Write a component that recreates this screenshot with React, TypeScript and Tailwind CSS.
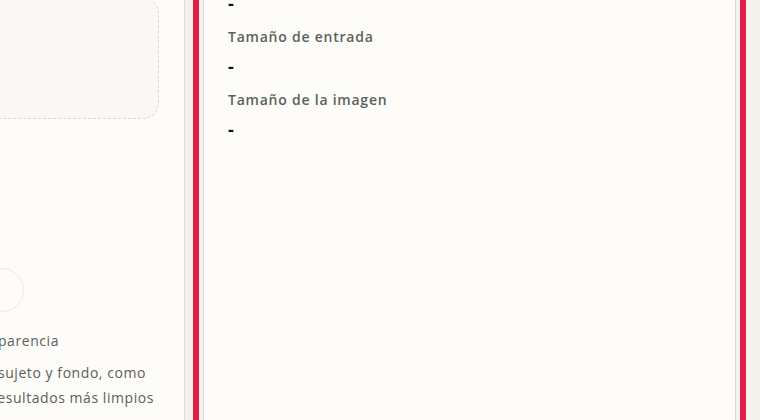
const FIELDS = [
  { label: "Formato", value: "-" },
  { label: "Tamaño de entrada", value: "-" },
  { label: "Tamaño de la imagen", value: "-" },
];

function Sidebar() {
  return (
    <aside className="w-[185px] shrink-0 overflow-hidden border-r border-[#dcd9d3] bg-[#fdfcf8]">
      <div className="-ml-[200px] w-[384px] pr-[25px]">
        {/* drop zone */}
        <div className="-mt-[3px] h-[122px] rounded-2xl border border-dashed border-[#dcd9d3] bg-[#f9f8f4]" />

        {/* option */}
        <div className="mt-[149px] flex">
          <div className="ml-[180px] h-[44px] w-[44px] rounded-full border border-[#ece9e3] bg-[#fdfcf8]" />
        </div>
        <div className="mt-[16px] text-[14px] leading-[25px] tracking-[0.04em] text-[#5b605b]">
          <div className="pr-[100px] text-right whitespace-nowrap">Transparencia</div>
          <div className="mt-[7px] pr-[13px] text-right whitespace-nowrap">Separa el sujeto y fondo, como</div>
          <div className="pr-[5px] text-right whitespace-nowrap">para resultados más limpios</div>
        </div>
      </div>
    </aside>
  );
}

function Details() {
  return (
    <section className="ml-[18px] w-[533px] shrink-0 -my-[20px] border border-[#dcd9d3] bg-[#fdfcf8] outline-[6px] outline-solid outline-offset-[4px] outline-[#e11d48]">
      <div className="-mt-[17px] flex flex-col gap-[12px] px-[24px]">
        {FIELDS.map((f) => (
          <div key={f.label}>
            <div className="mb-[7px] text-[14px] leading-[20px] font-semibold tracking-[0.055em] text-[#58625c]">
              {f.label}
            </div>
            <div className="text-[18px] leading-[24px] font-bold text-[#111]">{f.value}</div>
          </div>
        ))}
      </div>
    </section>
  );
}

export default function App() {
  return (
    <div
      className="flex h-[420px] w-[760px] overflow-hidden bg-[#f3f1ec]"
      style={{ fontFamily: '"Open Sans", "Noto Sans", sans-serif' }}
    >
      <Sidebar />
      <Details />
    </div>
  );
}
